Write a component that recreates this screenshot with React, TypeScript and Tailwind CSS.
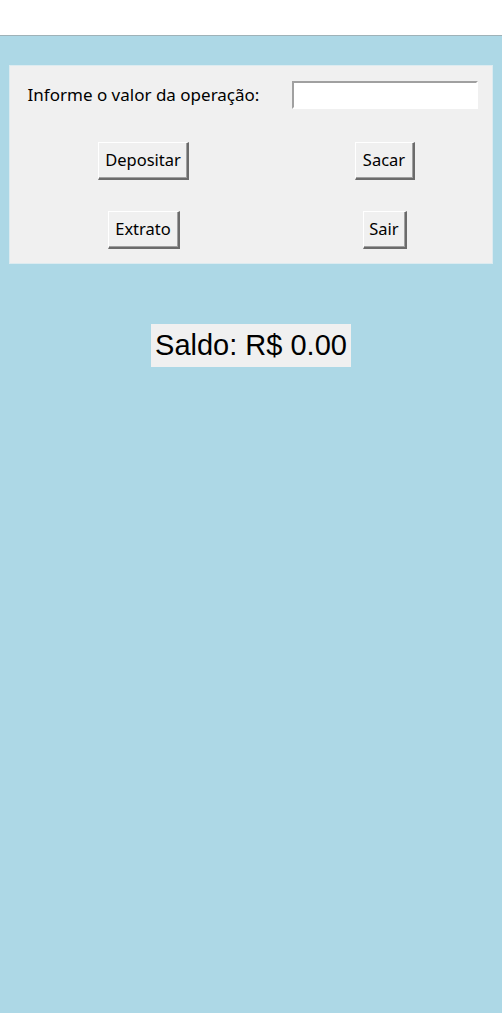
import { useState } from "react";

const btn =
  "flex h-[38px] items-center justify-center border-t border-l border-b-2 border-r-2 border-t-white border-l-white border-b-[#6b6b6b] border-r-[#6b6b6b] bg-[#f0f0f0] text-[16.5px] text-black shadow-[inset_-1px_-1px_0_#a0a0a0]";

export default function App() {
  const [valor, setValor] = useState("");

  return (
    <div className="flex min-h-[1013px] w-full flex-col bg-[#add8e6] font-['Noto_Sans',sans-serif]">
      {/* barra branca do topo */}
      <div className="h-[36px] border-b border-[#9fb2b8] bg-white" />

      {/* painel de operacoes */}
      <div className="mx-[9px] mt-[29px] w-[484px] border border-[#dcebf0] bg-[#f0f0f0] pt-[15px] pb-[14px]">
        <div className="grid grid-cols-[267px_1fr] items-center justify-items-center">
          <span className="text-[17px] text-black">Informe o valor da operação:</span>
          <input
            value={valor}
            onChange={(e) => setValor(e.target.value)}
            className="h-[28px] w-[186px] border-2 border-t-[#a0a0a0] border-l-[#a0a0a0] border-b-white border-r-white bg-white px-1 text-[15px] outline-none"
          />
        </div>

        <div className="mt-[33px] grid grid-cols-[267px_1fr] justify-items-center">
          <button className={btn + " w-[91px]"}>Depositar</button>
          <button className={btn + " w-[60px]"}>Sacar</button>
        </div>

        <div className="mt-[31px] grid grid-cols-[267px_1fr] justify-items-center">
          <button className={btn + " w-[72px]"}>Extrato</button>
          <button className={btn + " w-[44px]"}>Sair</button>
        </div>
      </div>

      {/* saldo */}
      <div className="mt-[60px] flex justify-center">
        <div className="flex h-[43px] w-[200px] items-center justify-center bg-[#f0f0f0] font-['Liberation_Sans',Arial,sans-serif] text-[29px] text-black">
          Saldo: R$ 0.00
        </div>
      </div>
    </div>
  );
}
